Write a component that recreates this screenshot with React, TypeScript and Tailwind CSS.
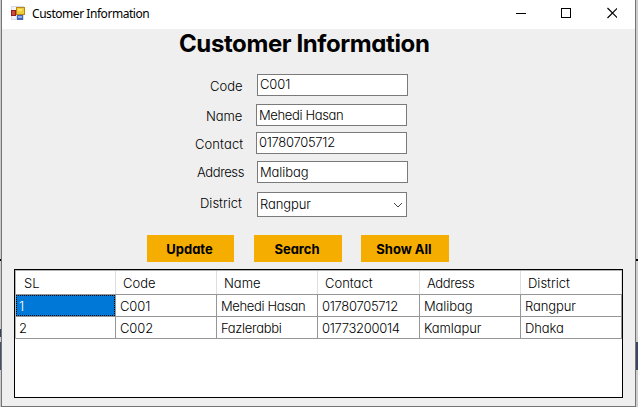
import type { ReactNode } from "react";

const columns = [
  { title: "SL", width: "w-[100px]", inset: "pl-[8px]" },
  { title: "Code", width: "w-[101px]", inset: "pl-[7px]" },
  { title: "Name", width: "w-[101px]", inset: "pl-[7px]" },
  { title: "Contact", width: "w-[102px]", inset: "pl-[7px]" },
  { title: "Address", width: "w-[101px]", inset: "pl-[7px] tracking-[-0.35px]" },
  { title: "District", width: "w-[101px]", inset: "pl-[7px]" },
];

const rows = [
  ["1", "C001", "Mehedi Hasan", "01780705712", "Malibag", "Rangpur"],
  ["2", "C002", "Fazlerabbi", "01773200014", "Kamlapur", "Dhaka"],
];

function cellTracking(text: string) {
  if (text === "Mehedi Hasan") return "tracking-[-0.35px]";
  if (text.startsWith("017")) return "tracking-[-0.3px]";
  if (text === "Fazlerabbi") return "tracking-[-0.3px]";
  return "tracking-[-0.1px]";
}

function FormIcon() {
  return (
    <svg width="14" height="15" viewBox="0 0 14 15" shapeRendering="crispEdges">
      <rect x="0" y="0" width="13" height="14" fill="#d9dce5" />
      <rect x="1" y="1" width="4" height="3" fill="#f3f3f6" />
      <rect x="0" y="4" width="5" height="6" fill="#8f211c" />
      <rect x="1" y="5" width="3" height="4" fill="#cf4b38" />
      <rect x="5" y="1" width="9" height="8" fill="#b98712" />
      <rect x="6" y="2" width="7" height="6" fill="#f0cb3c" />
      <rect x="7" y="3" width="4" height="2" fill="#fce66d" />
      <rect x="1" y="10" width="4" height="3" fill="#f4f4f8" />
      <rect x="6" y="9" width="6" height="5" fill="#4564b5" />
      <rect x="7" y="10" width="4" height="2" fill="#8caef0" />
    </svg>
  );
}

function Field({ label, value, labelClass, boxClass, rowClass, children }: {
  label: string;
  value: string;
  labelClass: string;
  boxClass: string;
  rowClass: string;
  children?: ReactNode;
}) {
  return (
    <div className={`flex ${rowClass}`}>
      <span className={`shrink-0 whitespace-nowrap leading-[22px] ${labelClass}`}>{label}</span>
      <div className={`flex shrink-0 justify-between border border-[#7a7a7a] bg-white pl-[2px] ${boxClass}`}>
        <span className={cellTracking(value)}>{value}</span>
        {children}
      </div>
    </div>
  );
}

function Action({ label, className }: { label: string; className: string }) {
  return (
    <button className={`h-[27px] bg-[#f5ae00] pr-[2px] text-[13px] leading-[26px] font-bold ${className}`}>{label}</button>
  );
}

export default function App() {
  return (
    <div className="flex h-[407px] w-[638px] overflow-hidden bg-[#c9c9c9] font-['Inter','Liberation_Sans',sans-serif] text-[13px] font-light text-black [font-feature-settings:'cv11']">
      <div className="w-px shrink-0 bg-[#c9cccf] pt-[259px]">
        <div className="h-[2px] bg-black" />
        <div className="mt-[68px] h-[8px] bg-[#39435c]" />
        <div className="mt-[5px] h-[28px] bg-[#44506b]" />
      </div>
      <div className="flex w-[635px] shrink-0 flex-col border-x border-b border-[#747474] bg-[#efefef]">
        <header className="flex h-[29px] shrink-0 bg-white pt-[6px] pl-[9px]">
          <FormIcon />
          <h1 className="ml-[7px] w-[473px] font-['Noto_Sans','Open_Sans',sans-serif] text-[12px] leading-[16px] font-normal tracking-[-0.45px]">Customer Information</h1>
          <svg width="112" height="14" viewBox="0 0 112 14" fill="none" stroke="black">
            <path d="M11 7.5h10M56.5 2.5h9v9h-9z" shapeRendering="crispEdges" />
            <path d="m102.5 2 10 10m0-10-10 10" strokeWidth="1.2" />
          </svg>
        </header>

        <h2 className="h-[45px] pl-[177px] text-[24px] leading-[29px] font-bold tracking-[-0.4px] whitespace-nowrap">Customer Information</h2>

        <Field label="Code" value="C001" rowClass="h-[30px] pl-[208px]" labelClass="w-[47px] pt-px" boxClass="h-[22px] w-[151px] leading-[19px]" />
        <Field label="Name" value="Mehedi Hasan" rowClass="h-[28px] pl-[204px]" labelClass="w-[50px] pt-px tracking-[-0.1px]" boxClass="h-[22px] w-[151px] leading-[20px]" />
        <Field label="Contact" value="01780705712" rowClass="h-[29px] pl-[193px]" labelClass="w-[61px] pt-px tracking-[0.1px]" boxClass="h-[22px] w-[151px] leading-[19px]" />
        <Field label="Address" value="Malibag" rowClass="h-[31px] pl-[195px]" labelClass="w-[60px] tracking-[-0.4px]" boxClass="h-[22px] w-[151px] leading-[20px]" />
        <Field label="District" value="Rangpur" rowClass="h-[43px] pl-[198px]" labelClass="w-[57px]" boxClass="h-[25px] w-[150px] leading-[23px]">
          <svg width="10" height="7" viewBox="0 0 10 7" fill="none" stroke="#444" className="mt-[9px] mr-[3px]">
            <path d="m1 1 4 4 4-4" />
          </svg>
        </Field>

        <div className="flex h-[34px] shrink-0 pl-[145px]">
          <Action label="Update" className="w-[87px]" />
          <Action label="Search" className="ml-[20px] w-[88px]" />
          <Action label="Show All" className="ml-[19px] w-[88px]" />
        </div>

        <div className="ml-[12px] h-[129px] w-[609px] shrink-0 border border-black bg-white">
          <div className="border-t border-l border-[#b4b4b4]">
            <div className="flex h-[24px] border-b border-[#969696]">
              {columns.map((c) => (
                <div key={c.title} className={`shrink-0 border-r border-[#dedede] leading-[24px] ${c.inset} ${c.width}`}>{c.title}</div>
              ))}
            </div>
            {rows.map((row, r) => (
              <div key={row[0]} className="flex h-[22px] border-b border-[#969696]">
                {row.map((cell, c) => (
                  <div key={c} className={`shrink-0 border-r border-[#969696] leading-[23px] ${columns[c].width}`}>
                    {r === 0 && c === 0 ? (
                      <div className="h-[21px] border border-dotted border-black bg-[#0078d7] pl-[2px] leading-[21px] text-white">{cell}</div>
                    ) : (
                      <span className={`${c === 0 ? "pl-[3px]" : "pl-[4px]"} ${cellTracking(cell)}`}>{cell}</span>
                    )}
                  </div>
                ))}
              </div>
            ))}
          </div>
        </div>
      </div>
      <div className="w-[2px] shrink-0 bg-[#cdcdcd] pt-[259px]">
        <div className="h-[2px] bg-black" />
        <div className="mt-[81px] h-[28px] bg-[#3b4863]" />
      </div>
    </div>
  );
}
